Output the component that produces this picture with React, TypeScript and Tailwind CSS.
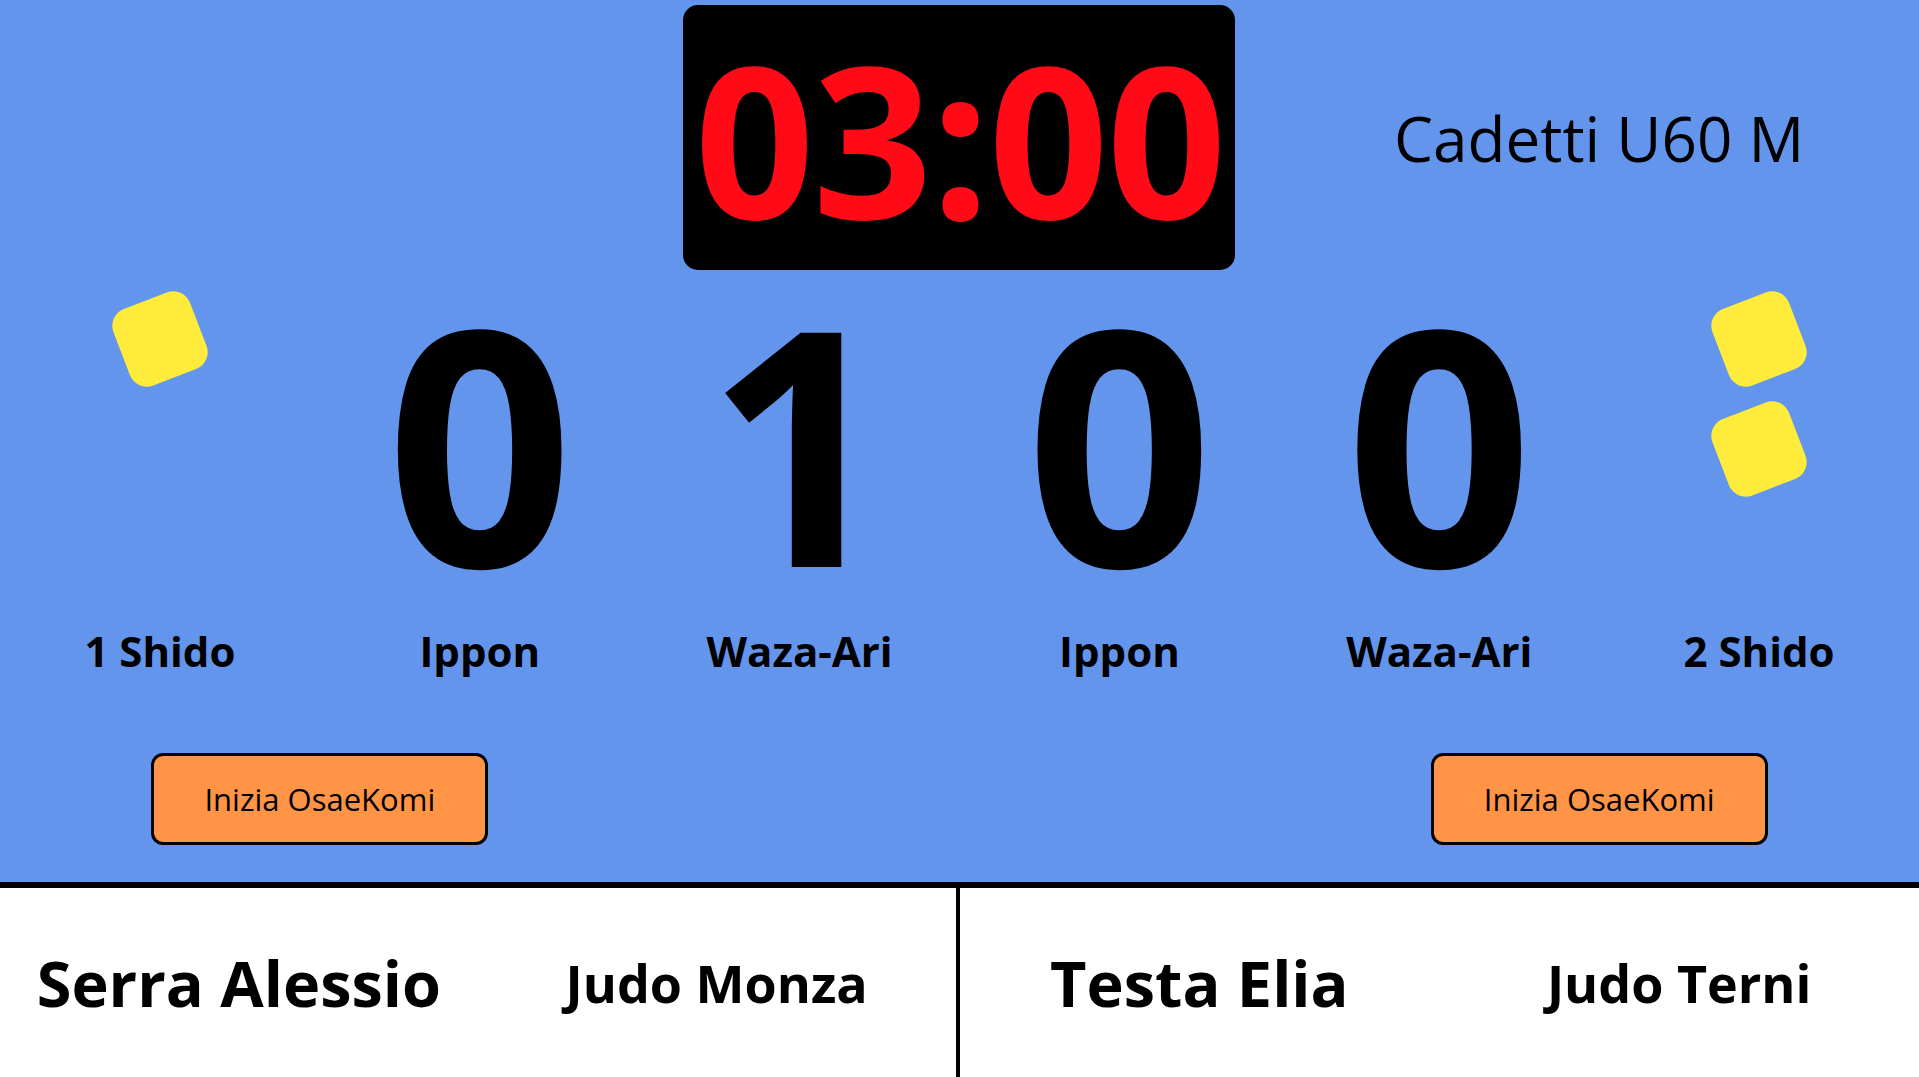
import React from "react";

const Shido = () => (
  <div className="w-[82px] h-[82px] rounded-[18px] bg-[#ffeb3b] rotate-[-21deg]" />
);

export default function App() {
  const scores = ["0", "1", "0", "0"];
  const labels = ["1 Shido", "Ippon", "Waza-Ari", "Ippon", "Waza-Ari", "2 Shido"];
  return (
    <div
      className="w-full h-screen flex flex-col overflow-hidden text-black"
      style={{ fontFamily: '"Open Sans", "Noto Sans", sans-serif' }}
    >
      <div className="h-[882px] bg-[#6495ed] flex flex-col">
        {/* top row */}
        <div className="grid grid-cols-3 items-center pt-[5px]">
          <div />
          <div className="flex justify-center">
            <div className="w-[552px] h-[265px] bg-black rounded-[15px] flex items-center justify-center">
              <span className="text-[#ff0a16] font-bold text-[210px] leading-[1] tracking-[-2px]">
                03:00
              </span>
            </div>
          </div>
          <div className="flex justify-center">
            <span className="text-[62px] leading-none">Cadetti U60 M</span>
          </div>
        </div>

        {/* scores */}
        <div className="grid grid-cols-6 h-[340px]">
          <div className="flex flex-col items-center pt-[28px]">
            <Shido />
          </div>
          {scores.map((s, i) => (
            <div key={i} className="flex items-center justify-center">
              <span className="font-bold text-[328px] leading-[0.8]">{s}</span>
            </div>
          ))}
          <div className="flex flex-col items-center pt-[28px] gap-[28px]">
            <Shido />
            <Shido />
          </div>
        </div>

        {/* labels */}
        <div className="grid grid-cols-6 mt-[20px]">
          {labels.map((l, i) => (
            <div key={i} className="text-center font-bold text-[42px] leading-none">
              {l}
            </div>
          ))}
        </div>

        {/* buttons */}
        <div className="grid grid-cols-3 mt-[81px]">
          <div className="flex justify-center">
            <button className="w-[337px] h-[92px] bg-[#ff9446] border-[3px] border-black rounded-[12px] text-[31px]">
              Inizia OsaeKomi
            </button>
          </div>
          <div />
          <div className="flex justify-center">
            <button className="w-[337px] h-[92px] bg-[#ff9446] border-[3px] border-black rounded-[12px] text-[31px]">
              Inizia OsaeKomi
            </button>
          </div>
        </div>
      </div>
      <div className="h-[6px] bg-black" />
      <div className="flex-1 bg-white grid grid-cols-2">
        <div className="grid grid-cols-2 items-center text-center border-r-4 border-black">
          <div className="font-bold text-[63px] leading-none">Serra Alessio</div>
          <div className="font-bold text-[52px] leading-none">Judo Monza</div>
        </div>
        <div className="grid grid-cols-2 items-center text-center">
          <div className="font-bold text-[63px] leading-none">Testa Elia</div>
          <div className="font-bold text-[52px] leading-none">Judo Terni</div>
        </div>
      </div>
    </div>
  );
}
